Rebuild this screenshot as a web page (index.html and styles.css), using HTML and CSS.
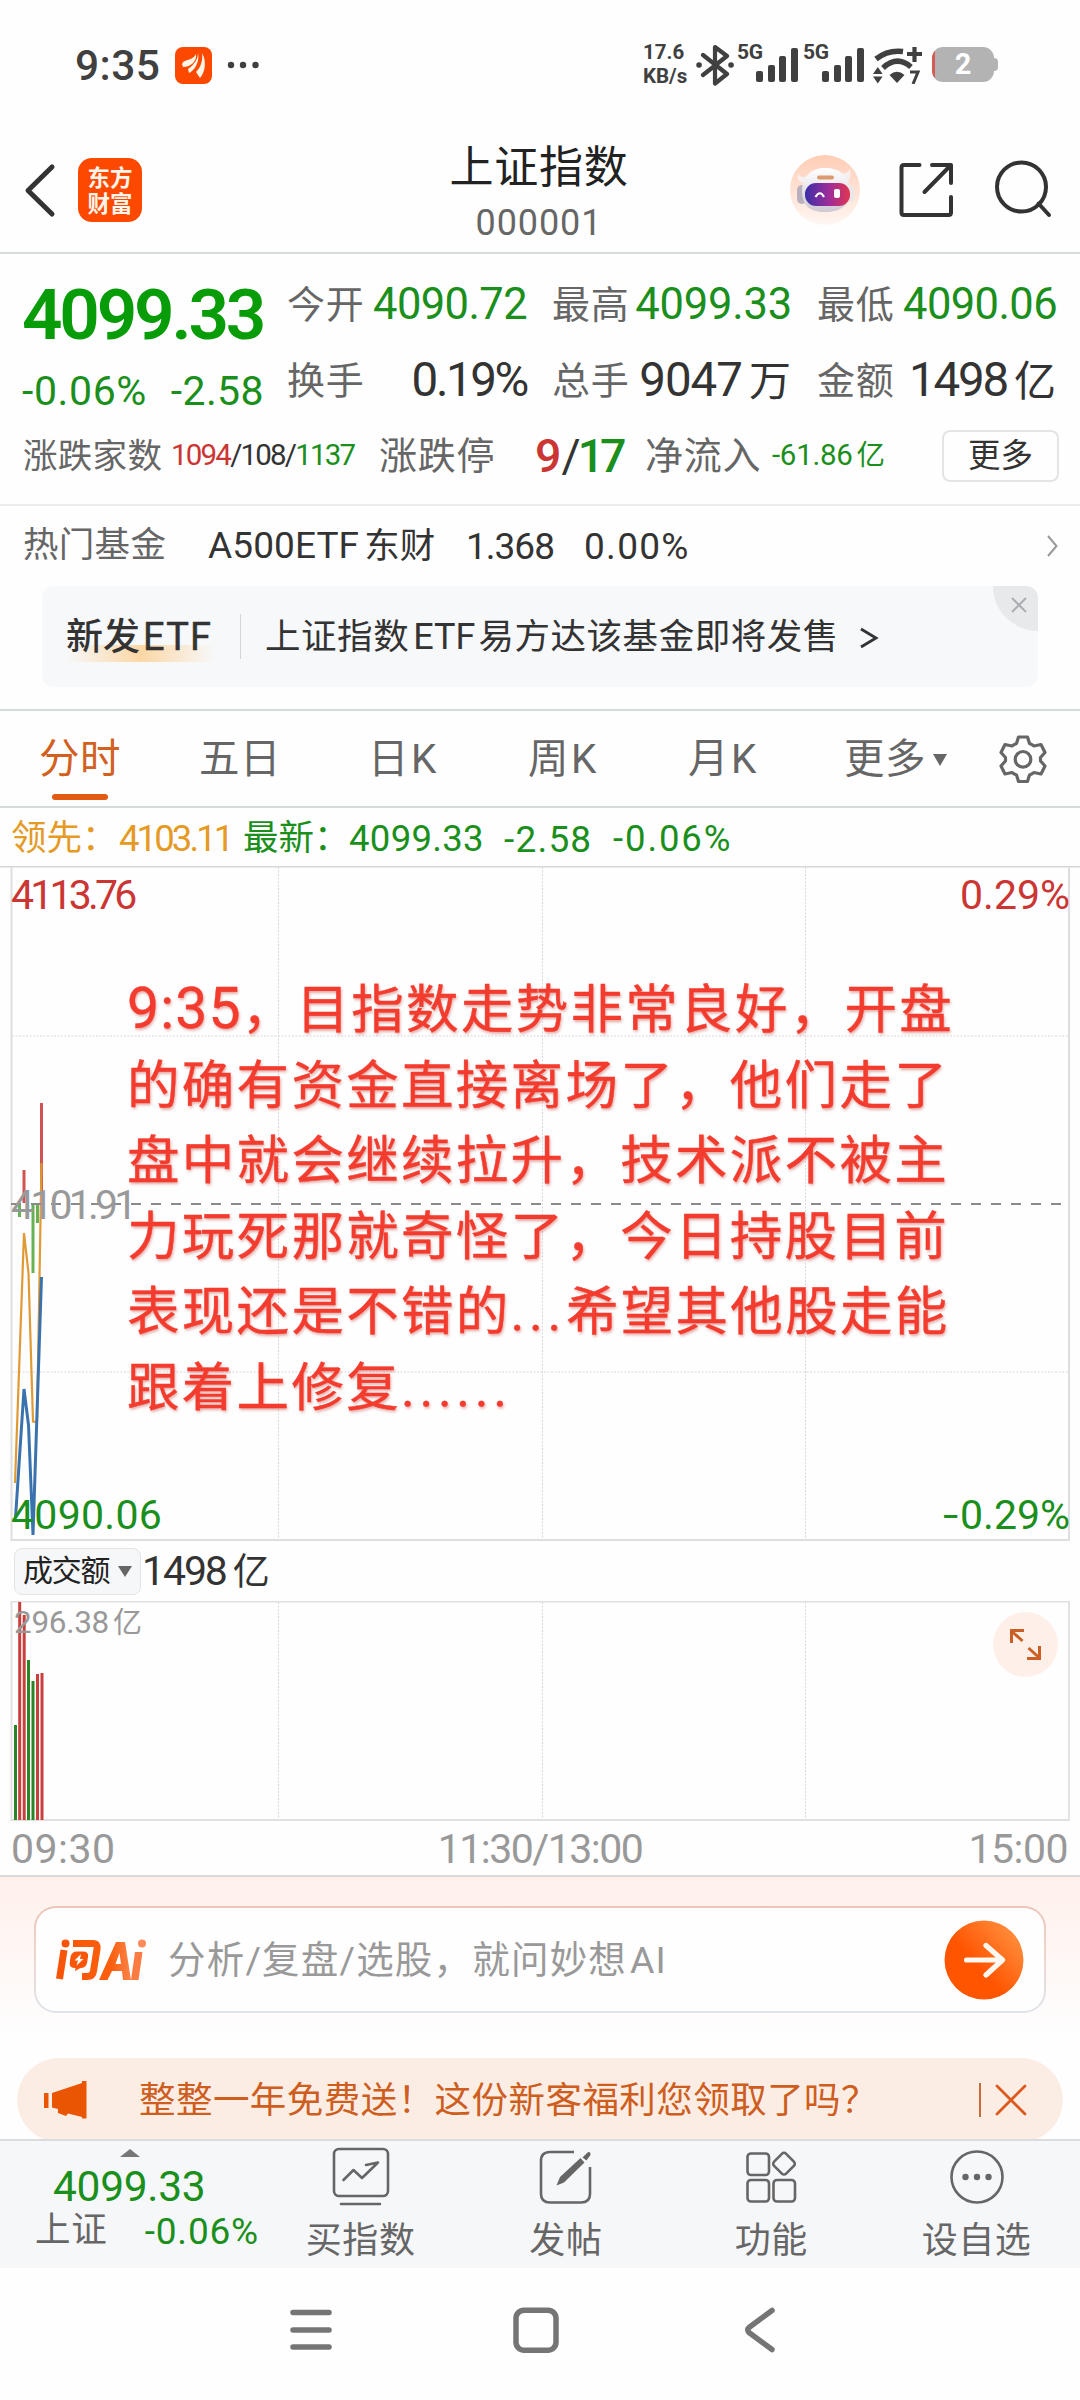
FILE: index.html
```html
<!DOCTYPE html>
<html lang="zh-CN">
<head>
<meta charset="utf-8">
<title>上证指数 000001</title>
<link rel="stylesheet" href="styles.css">
</head>
<body>
<div class="phone">
  <div class="status">
    <span class="clock">9:35</span>
    <svg class="status-app" width="37" height="37" viewBox="0 0 37 37"><rect width="37" height="37" rx="8" fill="#fd4800"/><path d="M7 17C8 12 18 14 21 7C22 14 16 20 8 20ZM23 6C25 15 19 24 14 26L13 22C19 18 23 12 23 6ZM27 6C32 14 30 26 25 31L21 25C26 20 28 13 27 6Z" fill="#fff6e8"/></svg>
    <svg class="status-dots" width="34" height="8" viewBox="0 0 34 8" fill="#404040"><circle cx="5" cy="4" r="3.2"/><circle cx="17" cy="4" r="3.2"/><circle cx="29.500" cy="4" r="3.2"/></svg>
    <div class="netspeed"><span>17.6</span><span>KB/s</span></div>
    <svg class="bt" width="38" height="42" viewBox="0 0 38 42" fill="none" stroke="#404040" stroke-width="4.2" stroke-linejoin="round" stroke-linecap="round"><path d="M7 11L31 30L19 39.500V3L31 12L7 31"/><path d="M3 21h.1M35 21h.1" stroke-width="5.500"/></svg>
    <div class="signal"><span>5G</span><i class="b1"></i><i class="b2"></i><i class="b3"></i><i class="b4"></i></div>
    <div class="signal"><span>5G</span><i class="b1"></i><i class="b2"></i><i class="b3"></i><i class="b4"></i></div>
    <svg class="wifi" width="50" height="40" viewBox="0 0 50 40" fill="none" stroke="#404040"><path d="M3 15Q15 5.500 30 7.500" stroke-width="5.500"/><path d="M10 24Q24 11 38 23" stroke-width="5.500"/><path d="M16.500 31Q24 24.500 31.500 31L24 39Z" fill="#404040" stroke="none"/><path d="M0 30L4.800 23L9.600 30ZM0 32.500L4.800 39.500L9.600 32.500Z" fill="#404040" stroke="none"/><path d="M34 10h15M41.500 3v15" stroke-width="4.200"/><path d="M37 28h8l-5 12" stroke-width="3"/></svg>
    <div class="battery"><span>2</span></div>
  </div>

  <header class="head">
    <svg class="back" width="34" height="56" viewBox="0 0 34 56" fill="none" stroke="#333" stroke-width="5" stroke-linecap="round" stroke-linejoin="round"><path d="M28 4L4 27.500L28 51"/></svg>
    <div class="brand">东方<br>财富</div>
    <div class="title"><h1>上证指数</h1><span>000001</span></div>
    <svg class="robot" width="70" height="70" viewBox="0 0 70 70">
      <defs><linearGradient id="halo" x1="0" y1="0" x2="0" y2="1"><stop offset="0" stop-color="#ffcdb5"/><stop offset="1" stop-color="#fff6f2"/></linearGradient><linearGradient id="visor"><stop offset="0" stop-color="#3c2fa8"/><stop offset=".55" stop-color="#a02c98"/><stop offset="1" stop-color="#e0364e"/></linearGradient><linearGradient id="helmet" x1="0" y1="0" x2="0" y2="1"><stop offset="0" stop-color="#fff"/><stop offset="1" stop-color="#cfc9d2"/></linearGradient></defs>
      <circle cx="35" cy="35" r="35" fill="url(#halo)"/>
      <path d="M8 19Q6 26 14 28L20 18Q12 26 8 19ZM60 14Q62 24 56 28L48 18Q57 20 60 14Z" fill="#f6efef"/>
      <rect x="7" y="30" width="10" height="19" rx="5" fill="#b9b0bd"/><rect x="54" y="30" width="10" height="17" rx="5" fill="#ece6ea"/>
      <path d="M12 36C12 21 22 13 35 13C49 13 60 21 60 36C60 51 50 57 35 57C20 57 12 51 12 36Z" fill="url(#helmet)"/>
      <rect x="27" y="20.500" width="17" height="4" rx="2" fill="#dc9a70"/>
      <rect x="15" y="28" width="45" height="23" rx="11" fill="url(#visor)"/>
      <path d="M25.500 42Q30 34.500 34 42" fill="none" stroke="#fff" stroke-width="2.200"/><rect x="44" y="34" width="6" height="9" rx="2" fill="#fff"/>
    </svg>
    <svg class="share" width="56" height="58" viewBox="0 0 56 58" fill="none" stroke="#333" stroke-width="4" stroke-linecap="round" stroke-linejoin="round"><path d="M21.500 4H6Q3.500 4 3.500 6.500V51.500Q3.500 54 6 54H50.500Q53 54 53 51.500V36M34 4H53V22M52 5L26.500 31"/></svg>
    <svg class="search" width="58" height="58" viewBox="0 0 58 58" fill="none" stroke="#333" stroke-width="4" stroke-linecap="round"><circle cx="27.500" cy="27" r="24.500"/><path d="M44.500 43.500L55 55"/></svg>
  </header>

  <section class="quote">
    <div class="quote-top">
      <div class="last"><b>4099.33</b><p><span>-0.06%</span><span>-2.58</span></p></div>
      <div class="stats">
        <div><label>今开</label><span class="v dn">4090.72</span></div>
        <div><label>最高</label><span class="v dn high">4099.33</span></div>
        <div><label>最低</label><span class="v dn">4090.06</span></div>
        <div><label>换手</label><span class="v big">0.19%</span></div>
        <div><label>总手</label><span class="v big unit">9047<em>万</em></span></div>
        <div><label>金额</label><span class="v big unit narrow">1498<em>亿</em></span></div>
      </div>
    </div>
    <div class="breadth">
      <label class="l35">涨跌家数</label>
      <span class="counts"><i class="up">1094</i>/108/<i class="dn">1137</i></span>
      <label class="lim">涨跌停</label>
      <span class="limits"><i class="up">9</i>/<i class="dn">17</i></span>
      <label class="inflow">净流入</label>
      <span class="flow dn">-61.86<em>亿</em></span>
      <button>更多</button>
    </div>
  </section>

  <section class="fund">
    <label>热门基金</label><span class="fname">A500ETF<em>东财</em></span><span class="fprice">1.368</span><span class="fpct">0.00%</span>
    <svg width="12" height="24" viewBox="0 0 12 24" fill="none" stroke="#999" stroke-width="2"><path d="M1 2L9.500 12L1 22"/></svg>
  </section>
  <section class="promo">
    <div class="promo-card">
      <strong>新发<em>ETF</em></strong><i class="bar"></i><span>上证指数<em>ETF</em>易方达该基金即将发售</span><svg class="gt" width="20" height="22" viewBox="0 0 20 22" fill="none" stroke="#333" stroke-width="2.800"><path d="M2 2L17 11L2 20"/></svg>
      <div class="close"><svg width="18" height="18" viewBox="0 0 18 18" stroke="#aaaeb3" stroke-width="2"><path d="M2 2L16 16M16 2L2 16"/></svg></div>
    </div>
  </section>

  <nav class="tabs">
    <a class="on">分时</a><a>五日</a><a>日<em>K</em></a><a>周<em>K</em></a><a>月<em>K</em></a><a>更多<svg width="14" height="12" viewBox="0 0 14 12"><path d="M0 0H14L7 12Z" fill="#666"/></svg></a>
    <svg class="gear" width="50" height="50" viewBox="0 0 50 50" fill="none" stroke="#666" stroke-width="3.200" stroke-linejoin="round"><path d="M20.500 3H29.500L31.500 9.500Q34 10.500 36 12L43 10.500L47 18.500L42.500 23.500V27L47 32L43 40L36 38.500Q34 40 31.500 41L29.500 47.500H20.500L18.500 41Q16 40 14 38.500L7 40L3 32L7.500 27V23.500L3 18.500L7 10.500L14 12Q16 10.500 18.500 9.500Z"/><circle cx="25" cy="25.300" r="7.800"/></svg>
  </nav>

  <div class="legend"><span class="lead">领先：</span><span class="lead n1">4103.11</span><span class="dn">最新：</span><span class="dn n2">4099.33</span><span class="dn n3">-2.58</span><span class="dn n4">-0.06%</span></div>

  <section class="chart">
    <svg width="1080" height="675" viewBox="0 866 1080 675" fill="none">
      <path d="M0 866.500H1080" stroke="#d4d8d8" stroke-width="2"/>
      <path d="M278.500 867V1540M542.500 867V1540M805.500 867V1540M12 1036H1068M12 1372H1068" stroke="#d9d9d9" stroke-dasharray="2 1.500"/>
      <path d="M11.500 867V1540H1069V867" stroke="#dedee0" stroke-width="2"/>
      <path d="M24 1170V1203M41.500 1103V1203" stroke="#cf5350" stroke-width="3"/>
      <path d="M19.500 1204V1217M33 1204V1273M37.500 1204V1223" stroke="#67b254" stroke-width="3"/>
      <path d="M15 1483L24 1233L28.500 1273L33 1421.500L37 1422L41.500 1163" stroke="#e09a34" stroke-width="2.200"/>
      <path d="M15.500 1518L24 1389L28.500 1425L33 1535L41.500 1277" stroke="#3a72ae" stroke-width="3"/>
      <path d="M11 1204H1062" stroke="#8a8a8a" stroke-width="2" stroke-dasharray="10 10"/>
    </svg>
    <span class="lb up t1 tight">4113.76</span><span class="lb up t1 r">0.29%</span>
    <span class="lb gray t2 tight">4101.91</span>
    <span class="lb dn t3">4090.06</span><span class="lb dn t3 r low"><i>-</i>0.29%</span>
    <p class="note"><span class="tm">9:35</span>，目指数走势非常良好，开盘<br>的确有资金直接离场了，他们走了<br>盘中就会继续拉升，技术派不被主<br>力玩死那就奇怪了，今日持股目前<br>表现还是不错的<span class="dots">...</span>希望其他股走能<br>跟着上修复<span class="dots">......</span></p>
  </section>

  <div class="turnover"><div class="pill">成交额<svg width="14" height="11" viewBox="0 0 14 11"><path d="M0 0H14L7 11Z" fill="#666"/></svg></div><span>1498<em>亿</em></span></div>
  <section class="volume">
    <svg width="1080" height="220" viewBox="0 1601 1080 220" fill="none">
      <path d="M278.500 1602V1819M542.500 1602V1819M805.500 1602V1819" stroke="#d9d9d9" stroke-dasharray="2 1.500"/>
      <path d="M11.500 1601.500V1820H1069V1601.500Z" stroke="#e0e0e0" stroke-width="1.800"/>
      <path d="M15.500 1725V1820M28.500 1660V1820M33 1681V1820" stroke="#2a8524" stroke-width="3"/>
      <path d="M19.700 1602V1820M24.200 1615V1820M37.500 1674V1820M42 1673V1820" stroke="#c93f3e" stroke-width="3"/>
      <circle cx="1025.500" cy="1644.500" r="32.500" fill="#fef0e9"/>
      <path d="M1022.500 1641L1011.500 1631M1011.500 1643V1630.500H1024M1028.500 1648L1039.500 1658M1039.500 1646V1658.500H1027" stroke="#cb5f25" stroke-width="3"/>
    </svg>
    <span class="vmax">296.38<em>亿</em></span>
  </section>
  <div class="axis"><span>09:30</span><span class="mid">11:30/13:00</span><span>15:00</span></div>

  <section class="ai">
    <div class="ask">
      <div class="ask-logo">
        <svg width="92" height="44" viewBox="0 0 92 44" fill="none"><defs><linearGradient id="ailogo" gradientUnits="userSpaceOnUse" x1="0" y1="0" x2="92" y2="0"><stop offset="0" stop-color="#f95306"/><stop offset=".6" stop-color="#fb600f"/><stop offset="1" stop-color="#fda27a"/></linearGradient></defs><g stroke="url(#ailogo)"><path d="M8 12L3.500 41" stroke-width="7"/><path d="M17 5.500H37Q42 5.500 41 11L37.500 33Q37 38.500 31 38.500H26" stroke-width="7" stroke-linejoin="round"/></g><path d="M14.500 19Q15.500 13.500 21 13.500H27Q33 13.500 32 19L31 25Q30 30 24.500 30L19 33L19.500 30Q13 30 13.700 25Z" fill="#fa560a"/><path d="M25 16L18.500 22.500H22L20.500 27.500L27.500 21H24Z" fill="#fff"/><circle cx="9.500" cy="5.500" r="4" fill="#f95306"/><path d="M43 42L60 4H69L75 42H67L66 33H56L51.500 42ZM59.500 26H65L63.500 15Z" fill="url(#ailogo)" fill-rule="evenodd"/><path d="M79 14H86.500L82.500 42H75Z" fill="#fb7c43"/><circle cx="86" cy="5.500" r="4" fill="#fc8b5c"/></svg>
      </div>
      <span>分析/复盘/选股，就问妙想<em>AI</em></span>
      <svg class="go" width="80" height="80" viewBox="0 0 80 80"><defs><linearGradient id="go" x1=".1" y1=".8" x2=".9" y2=".1"><stop offset=".35" stop-color="#ff5400"/><stop offset="1" stop-color="#ff903f"/></linearGradient></defs><circle cx="40" cy="40" r="39.500" fill="url(#go)"/><path d="M22.500 40H58M42 25.500L58.500 40L42 55" fill="none" stroke="#fff8f0" stroke-width="5.200" stroke-linecap="round" stroke-linejoin="round"/></svg>
    </div>
    <div class="notice">
      <svg width="44" height="40" viewBox="0 0 44 40" fill="#ea5504"><path d="M0 13H4.500V28H0ZM8 13L38 3V1H42.500V38.500H38V37L24 33.500L22 36L14 33V29L8 27.500Z"/></svg>
      <span>整整一年免费送！这份新客福利您领取了吗？</span><i></i>
      <svg class="nx" width="32" height="32" viewBox="0 0 32 32" stroke="#db5a1c" stroke-width="2.800" stroke-linecap="round"><path d="M2 2L30 30M30 2L2 30"/></svg>
    </div>
  </section>

  <footer class="bottom">
    <div class="idx">
      <svg width="20" height="8" viewBox="0 0 20 8"><path d="M0 8L10 0L20 8Z" fill="#777"/></svg>
      <b>4099.33</b>
      <p><label>上证</label><span>-0.06%</span></p>
    </div>
    <div class="act"><svg width="60" height="62" viewBox="0 0 60 62" fill="none" stroke="#666" stroke-width="2.600" stroke-linejoin="round" stroke-linecap="round"><rect x="3" y="3" width="54" height="47" rx="5"/><path d="M12.500 34L22.500 24L31 32L46.500 17M35 19L47 16.500M10 58H49"/></svg><span>买指数</span></div>
    <div class="act"><svg width="60" height="62" viewBox="0 0 60 62" fill="none" stroke="#666" stroke-width="2.600"><path d="M38 6H14Q5 6 5 15V48Q5 56.500 14 56.500H45Q54 56.500 54 48V21"/><path d="M20.500 39.500L24 31L44.500 12L48.500 16.500L28 36.500Z" fill="#666" stroke="none"/><path d="M46.500 11.500L51 7Q53.500 5 54.500 7.500Q55 9 53 11L50.500 14.500Z" fill="#666" stroke="none"/></svg><span>发帖</span></div>
    <div class="act"><svg width="60" height="62" viewBox="0 0 60 62" fill="none" stroke="#666" stroke-width="2.600"><rect x="6.500" y="7.500" width="21.500" height="21.500" rx="3.500"/><rect x="6.500" y="34" width="21.500" height="21.500" rx="3.500"/><rect x="32.500" y="34" width="21.500" height="21.500" rx="3.500"/><rect x="34.500" y="9.200" width="17" height="17" rx="3" transform="rotate(45 43 17.700)"/></svg><span>功能</span></div>
    <div class="act"><svg width="60" height="62" viewBox="0 0 60 62" fill="none" stroke="#666" stroke-width="2.600"><circle cx="30" cy="31" r="25.500"/><g fill="#666" stroke="none"><circle cx="18.500" cy="31" r="3.200"/><circle cx="30" cy="31" r="3.200"/><circle cx="41.500" cy="31" r="3.200"/></g></svg><span>设自选</span></div>
  </footer>
  <div class="sysnav">
    <svg width="46" height="46" viewBox="0 0 46 46" stroke="#757575" stroke-width="5.500" stroke-linecap="round"><path d="M5 5.500H41M5 23H41M5 40H41"/></svg>
    <svg width="46" height="46" viewBox="0 0 46 46" fill="none" stroke="#757575" stroke-width="5.500"><rect x="3" y="3.200" width="40" height="40" rx="8"/></svg>
    <svg width="46" height="46" viewBox="0 0 46 46" fill="none" stroke="#757575" stroke-width="5.500" stroke-linecap="round" stroke-linejoin="round"><path d="M34 3.500L11 20.500Q8.500 23 11 25.500L34 42.500"/></svg>
  </div>
</div>
</body>
</html>
```
FILE: styles.css
```css
* { box-sizing: border-box; margin: 0; padding: 0; }
body { width: 1080px; height: 2400px; background: #fefefe; font-family: Roboto, "Noto Sans CJK SC", sans-serif; line-height: 1; color: #333; }
.phone { width: 1080px; height: 2400px; display: flex; flex-direction: column; overflow: hidden; }
.phone > * { flex: none; }
i, em { font-style: normal; }
svg { display: block; flex: none; }
span, label, b { white-space: nowrap; }
.dn { color: #1a8f1c; }
.up { color: #cb3533; }
.gray { color: #999; }

/* status bar */
.status { height: 130px; padding: 44px 0 0 75px; display: flex; align-items: flex-start; color: #404040; }
.clock { width: 100px; padding-top: 1px; font-size: 42.500px; font-weight: 500; letter-spacing: .4px; }
.status-app { margin-top: 3px; }
.status-dots { margin: 17px 0 0 14px; }
.netspeed { margin-left: 383px; width: 52px; display: flex; flex-direction: column; gap: 3px; font-size: 20.500px; font-weight: 700; margin-top: -2px; }
.bt { margin-left: 1px; }
.signal { width: 66px; height: 40px; display: flex; align-items: flex-end; gap: 4.500px; position: relative; padding: 0 0 2px 18px; }
.bt + .signal { margin-left: 4px; }
.signal span { position: absolute; left: -1px; top: -2px; font-size: 21px; font-weight: 700; letter-spacing: -.3px; }
.signal i { width: 7px; border-radius: 2px; background: #404040; flex: none; }
.b1 { height: 11px; } .b2 { height: 17px; } .b3 { height: 26px; } .b4 { height: 34px; }
.wifi { margin-left: 3px; }
.battery { margin: 3px 0 0 9px; width: 62px; height: 35px; border-radius: 11px; background: linear-gradient(90deg, #d45c55 0 3px, #b3b3b3 3px); display: grid; place-items: center; color: #fff; font-size: 29px; font-weight: 700; position: relative; }
.battery::after { content: ""; position: absolute; right: -4px; top: 11px; width: 5px; height: 13px; border-radius: 0 4px 4px 0; background: #b3b3b3; }

/* header */
.head { height: 124px; border-bottom: 2px solid #d6dcdb; display: flex; align-items: flex-start; padding-left: 24px; }
.back { margin-top: 33px; }
.brand { margin: 28px 0 0 20px; width: 64px; height: 64px; border-radius: 14px; background: #fd4800; color: #fff4ea; font-size: 22.500px; font-weight: 700; line-height: 26px; text-align: center; padding-top: 7px; }
.title { margin: 14px 0 0 307px; width: 180px; text-align: center; }
.title h1 { font-size: 44px; font-weight: 400; line-height: 48px; color: #222; white-space: nowrap; letter-spacing: .8px; }
.title span { display: block; margin-top: 13px; font-size: 36px; letter-spacing: .9px; color: #666; }
.robot { margin: 25px 0 0 161px; }
.share { margin: 31px 0 0 38px; }
.search { margin: 30px 0 0 40px; }

/* quote */
.quote { height: 252px; border-bottom: 2px solid #ececec; }
.quote-top { display: flex; height: 165px; padding-left: 22px; }
.last { width: 265px; padding-top: 25px; color: #089c08; }
.last b { display: block; font-size: 71px; line-height: 72px; font-weight: 600; letter-spacing: -3.200px; }
.last p { margin-top: 20px; display: flex; justify-content: space-between; width: 242px; font-size: 41px; color: #1a8f1c; }
.last p span:first-child { letter-spacing: .6px; }
.last p span:last-child { letter-spacing: .4px; }
.stats { display: grid; grid-template-columns: repeat(3, 240px); column-gap: 25px; grid-auto-rows: 76px; padding-top: 13px; }
.stats div { display: flex; justify-content: space-between; align-items: center; }
label { color: #666; font-size: 38px; letter-spacing: .8px; }
.v { font-size: 43.500px; letter-spacing: -.6px; }
.v.high { letter-spacing: -.2px; }
.v.big { font-size: 47.500px; letter-spacing: -2.400px; }
.v.unit { letter-spacing: -1px; }
.v.narrow { letter-spacing: -2.200px; }
.v em { font-size: 42px; margin-left: 7px; letter-spacing: 0; margin-right: 1px; }
.breadth { display: flex; align-items: center; height: 74px; padding-left: 23px; }
.breadth .l35 { font-size: 34.500px; letter-spacing: .3px; width: 148px; }
.counts { width: 208px; font-size: 29.500px; letter-spacing: -1.800px; }
.lim { width: 156px; }
.limits { width: 110px; font-size: 46.500px; letter-spacing: -3px; }
.limits i { font-weight: 500; }
.limits .up { letter-spacing: 0; }
.limits .dn { letter-spacing: -4px; }
.inflow { width: 127px; }
.flow { width: 170px; font-size: 29.500px; letter-spacing: -.3px; }
.flow em { font-size: 28.500px; margin-left: 4px; }
.breadth button { width: 117px; height: 52px; border: 2px solid #e4e4e4; border-radius: 8px; background: #fefefe; font: 32.500px/1 Roboto, "Noto Sans CJK SC", sans-serif; color: #333; }

/* fund row and promo */
.fund { height: 80px; display: flex; align-items: center; padding-left: 23px; }
.fund label { width: 185px; font-size: 35.500px; letter-spacing: .3px; }
.fund span { font-size: 37px; }
.fund .fname { width: 258px; letter-spacing: .1px; }
.fund em { font-size: 35.500px; margin-left: 5px; }
.fund .fprice { width: 118px; letter-spacing: -1px; }
.fund .fpct { width: 463px; letter-spacing: 1.300px; }
.promo { height: 125px; padding-left: 42px; border-bottom: 2px solid #d6dcdb; }
.promo-card { width: 996px; height: 101px; border-radius: 12px; background: #f7f8fa; display: flex; align-items: center; padding-left: 24px; position: relative; overflow: hidden; }
.promo strong { width: 174px; height: 101px; line-height: 103px; font-weight: 500; font-size: 37px; white-space: nowrap; background: linear-gradient(90deg, rgba(255,214,155,0), #fcd7a5 50%, rgba(255,214,155,0)) 0 59px / 149px 17px no-repeat; }
.promo strong em { margin-left: 3px; font-size: 38px; letter-spacing: 1.200px; font-weight: 400; -webkit-text-stroke: .5px #333; }
.promo .bar { width: 1px; height: 45px; background: #d2d4d8; margin-right: 24px; }
.promo span { padding-top: 2px; font-size: 35.500px; letter-spacing: .55px; }
.promo span em { margin: 0 3px 0 4px; font-size: 36px; letter-spacing: 0; }
.gt { margin-left: 20px; margin-top: 2px; }
.close { position: absolute; right: 0; top: 0; width: 45px; height: 45px; background: #e8e9eb; border-radius: 0 0 0 45px; padding: 10px 0 0 17px; }

/* tabs */
.tabs { height: 97px; border-bottom: 2px solid #d6dcdb; display: grid; grid-template-columns: 160px 160px 165px 155px 165px 181px 74px; justify-items: center; align-items: center; font-size: 40.500px; color: #666; }
.tabs a { display: flex; align-items: center; height: 95px; padding-top: 2px; position: relative; letter-spacing: .6px; white-space: nowrap; }
.tabs em { margin-left: 2px; }
.tabs a svg { margin-left: 7px; }
.tabs .on { color: #d2601f; }
.tabs .on::after { content: ""; position: absolute; left: 50%; margin-left: -28px; bottom: 6px; width: 56px; height: 6px; border-radius: 3px; background: #e35a12; }

.legend { height: 58px; display: flex; align-items: center; padding: 4px 0 0 11px; font-size: 36.500px; }
.legend .lead { color: #e59a26; }
.legend span:nth-child(odd) { font-size: 35.500px; }
.legend span:nth-child(1) { width: 108px; }
.legend .n1 { width: 124px; letter-spacing: -2.900px; }
.legend span:nth-child(3) { width: 106px; }
.legend .n2 { width: 155px; letter-spacing: .3px; }
.legend .n3 { width: 109px; font-size: 37px !important; letter-spacing: 1.200px; }
.legend .n4 { letter-spacing: 1.900px; }

/* price chart */
.chart { height: 675px; position: relative; }
.lb { position: absolute; left: 11px; font-size: 41px; }
.lb:not(.tight):not(.r) { letter-spacing: .3px; }
.lb.tight { letter-spacing: -3.800px; }
.lb.r { left: auto; right: 10px; }
.lb.low i { display: inline-block; transform: scaleX(1.350); transform-origin: right; margin-right: 2px; }
.t1 { top: 9px; } .t2 { top: 319px; } .t3 { top: 629px; }
.note { position: absolute; left: 127px; top: 107px; font-size: 52.500px; line-height: 75.600px; letter-spacing: 2.300px; color: #f33b2e; white-space: nowrap; font-weight: 400; -webkit-text-stroke: .4px #f33b2e; text-shadow: 1px 2px 3px rgba(190, 60, 50, .45); }
.note .tm { font-size: 57px; letter-spacing: 1.200px; line-height: 50px; }
.note .dots { letter-spacing: 4.600px; }

/* turnover */
.turnover { height: 60px; display: flex; align-items: center; padding-left: 14px; }
.pill { width: 127px; height: 47px; border: 1.500px solid #e2e4e6; border-radius: 8px; background: #f6f7f9; display: flex; align-items: center; padding-left: 8px; font-size: 30px; letter-spacing: -1.300px; color: #222; white-space: nowrap; }
.pill svg { margin-left: 9px; }
.turnover > span { margin-left: 1px; padding-top: 1px; font-size: 41px; letter-spacing: -2.100px; }
.turnover em { font-size: 37px; margin-left: 7px; }
.volume { height: 220px; position: relative; }
.vmax { position: absolute; left: 14px; top: 6px; font-size: 31.500px; letter-spacing: -.3px; color: #999; }
.vmax em { margin-left: 4px; font-size: 29px; }
.axis { height: 56px; display: flex; justify-content: space-between; align-items: center; padding: 2px 12px 0 11px; font-size: 41px; color: #999; border-bottom: 2px solid #dadada; }
.axis span:first-child { letter-spacing: .5px; }
.axis .mid { letter-spacing: -1.500px; margin-left: -4px; }
.axis span:last-child { letter-spacing: -.5px; }

/* assistant */
.ai { height: 262px; background: linear-gradient(#fff0eb, #fefefe 160px); padding: 29px 0 0 17px; overflow: hidden; }
.ask { margin-left: 17px; width: 1012px; height: 107px; border-radius: 22px; border: 2px solid transparent; background: linear-gradient(#fefefe, #fefefe) padding-box, linear-gradient(#ecc4b9, #f0d4cc 40%, #dfe4ea) border-box; display: flex; align-items: center; padding-left: 20px; }
.ask-logo { width: 112px; }
.ask span { width: 776px; padding-top: 2px; color: #999; font-size: 37.500px; letter-spacing: 1.200px; }
.ask em { margin-left: 3px; letter-spacing: 1px; }
.notice { margin-top: 45px; width: 1046px; height: 84px; border-radius: 42px; background: #fcede4; display: flex; align-items: center; padding-left: 27px; color: #ce5d20; }
.notice span { width: 840px; margin-left: 51px; padding-top: 2px; font-size: 36.500px; letter-spacing: .45px; }
.notice i { width: 2px; height: 34px; background: #c96a3a; margin-right: 14px; }

/* bottom actions */
.bottom { height: 129px; border-top: 2px solid #dadcde; background: #f6f7f9; display: grid; grid-template-columns: 258px repeat(4, 205.300px); }
.idx { color: #1a8f1c; padding-top: 8px; }
.idx svg { margin-left: 120px; }
.idx b { display: block; margin: 9px 0 0 53px; font-size: 42.500px; font-weight: 400; letter-spacing: -.3px; }
.idx p { display: flex; align-items: center; justify-content: space-between; margin: 4px 0 0 35px; width: 224px; font-size: 37px; letter-spacing: .8px; }
.idx label { font-size: 35.500px; }
.act { display: flex; flex-direction: column; align-items: center; padding-top: 5px; color: #666; font-size: 36px; }
.act span { margin-top: 15px; letter-spacing: .6px; }
.sysnav { height: 132px; display: flex; justify-content: center; gap: 179px; padding: 39px 9px 0 0; }
```
